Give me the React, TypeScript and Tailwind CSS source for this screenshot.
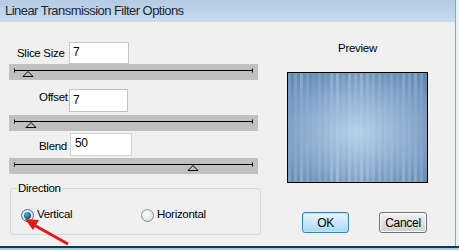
import React from 'react'

const stripes = [
  0.18, 0.05, 0.22, 0.1, 0.3, 0.08, 0.15, 0.26, 0.04, 0.2, 0.12, 0.28, 0.07, 0.18, 0.24, 0.09,
  0.3, 0.14, 0.06, 0.22, 0.27, 0.1, 0.19, 0.05, 0.25, 0.13, 0.21, 0.08, 0.16, 0.29, 0.11, 0.23,
  0.06, 0.2, 0.14, 0.26, 0.09, 0.17, 0.24, 0.07, 0.19, 0.12, 0.28, 0.05, 0.21, 0.15
]

function Slider({ thumb }: { thumb: number }) {
  return (
    <div className="w-[249px] h-[16px] bg-[#c0c0c0]">
      <svg width="249" height="16" viewBox="0 0 249 16">
        <line x1="5" y1="6.5" x2="244" y2="6.5" stroke="#000" strokeWidth="1" />
        <line x1="5.5" y1="4.5" x2="5.5" y2="8.5" stroke="#000" strokeWidth="1" />
        <line x1="243.5" y1="4.5" x2="243.5" y2="8.5" stroke="#000" strokeWidth="1" />
        <polygon
          points={`${thumb - 5},12.5 ${thumb + 5},12.5 ${thumb},7.5`}
          fill="none"
          stroke="#000"
          strokeWidth="1"
        />
      </svg>
    </div>
  )
}

function Radio({ checked }: { checked?: boolean }) {
  return (
    <div
      className={
        checked
          ? 'w-[13px] h-[13px] rounded-full border border-[#3f6f8f] bg-[radial-gradient(circle_at_50%_40%,#ffffff,#c9d6e0)] flex items-center justify-center'
          : 'w-[13px] h-[13px] rounded-full border border-[#8e8f8f] bg-[radial-gradient(circle_at_40%_35%,#ffffff,#d4d4d4)] flex items-center justify-center'
      }
    >
      {checked && (
        <div className="w-[7px] h-[7px] rounded-full bg-[radial-gradient(circle_at_40%_35%,#5fb8dd,#0f4c6c_70%)]" />
      )}
    </div>
  )
}

function Preview() {
  return (
    <svg width="139" height="109" viewBox="0 0 139 109">
      <defs>
        <radialGradient id="pg" cx="0.5" cy="0.55" r="0.7">
          <stop offset="0" stopColor="#b9d2ea" />
          <stop offset="0.55" stopColor="#8cadd0" />
          <stop offset="1" stopColor="#6189b3" />
        </radialGradient>
        <linearGradient id="fade" x1="0" y1="0" x2="0" y2="1">
          <stop offset="0" stopColor="#fff" stopOpacity="1" />
          <stop offset="0.35" stopColor="#fff" stopOpacity="0.2" />
          <stop offset="0.65" stopColor="#fff" stopOpacity="0.2" />
          <stop offset="1" stopColor="#fff" stopOpacity="1" />
        </linearGradient>
        <mask id="fm">
          <rect x="0" y="0" width="139" height="109" fill="url(#fade)" />
        </mask>
      </defs>
      <rect x="0" y="0" width="139" height="109" fill="url(#pg)" />
      <g mask="url(#fm)">
        {stripes.map((o, i) => (
          <rect
            key={i}
            x={i * 3}
            y="0"
            width="3"
            height="109"
            fill={i % 2 === 0 ? '#dbe8f5' : '#5a82ad'}
            opacity={o}
          />
        ))}
      </g>
    </svg>
  )
}

export default function App() {
  return (
    <div className="relative w-[459px] h-[250px] overflow-hidden bg-[#f0f0f0] flex flex-col font-['Liberation_Sans',Arial,sans-serif] text-black">
      <div className="flex h-[246px]">
        <div className="flex-1 flex flex-col">
          <div className="h-[22px] flex items-center pl-[5px] bg-gradient-to-b from-[#b4cbe4] to-[#c9dbef] text-[13px] tracking-[-0.55px] text-[#1a2636]">
            Linear Transmission Filter Options
          </div>

          <div className="flex">
            <div className="pl-[9px] w-[258px] flex flex-col text-[11.5px] tracking-[-0.3px]">
              <div className="mt-[20px] flex items-center h-[22px]">
                <span className="ml-[8px] w-[52px] pt-[1px]">Slice Size</span>
                <input
                  readOnly
                  defaultValue="7"
                  className="w-[60px] h-[22px] border border-[#c5c7cb] bg-white pl-[3px] pb-[2px] text-[12px] outline-none"
                />
              </div>
              <Slider thumb={19} />

              <div className="mt-[9px] flex items-center h-[23px]">
                <span className="ml-[30px] w-[30px] pb-[6px]">Offset</span>
                <input
                  readOnly
                  defaultValue="7"
                  className="w-[59px] h-[23px] border border-[#a9c8e6] bg-white pl-[3px] pb-[2px] text-[12px] outline-none"
                />
              </div>
              <div className="mt-[3px]">
                <Slider thumb={22} />
              </div>

              <div className="mt-[2px] flex items-center h-[23px]">
                <span className="ml-[30px] w-[31px] pt-[5px]">Blend</span>
                <input
                  readOnly
                  defaultValue="50"
                  className="w-[62px] h-[23px] border border-[#d0d2d6] bg-white pl-[4px] pb-[3px] text-[12px] outline-none"
                />
              </div>
              <div className="mt-[2px]">
                <Slider thumb={184} />
              </div>

              <fieldset className="mt-[7px] ml-[1px] w-[251px] h-[54px] border border-[#d5dadf] rounded-[3px] pt-[13px]">
                <legend className="ml-[6px] px-[1px] leading-[14px]">Direction</legend>
                <div className="flex items-center h-[14px] pl-[10px]">
                  <div className="w-[120px] flex items-center gap-[3px]">
                    <Radio checked />
                    <span>Vertical</span>
                  </div>
                  <div className="flex items-center gap-[3px]">
                    <Radio />
                    <span>Horizontal</span>
                  </div>
                </div>
              </fieldset>
            </div>

            <div className="ml-[29px] w-[141px] flex flex-col text-[11.5px] tracking-[-0.3px]">
              <div className="mt-[19px] h-[14px] leading-[14px] text-center">Preview</div>
              <div className="mt-[17px] w-[141px] h-[111px] border border-black">
                <Preview />
              </div>
              <div className="mt-[29px] ml-[15px] flex gap-[30px] text-[12px]">
                <button className="w-[47px] h-[21px] rounded-[3px] border border-[#3c7fb1] bg-gradient-to-b from-[#eaf6fd] to-[#a7d9f5] shadow-[inset_0_0_0_1px_#c4e5f6]">
                  OK
                </button>
                <button className="w-[48px] h-[21px] rounded-[3px] border border-[#707070] bg-gradient-to-b from-[#f2f2f2] to-[#d0d0d0] shadow-[inset_0_0_0_1px_#fcfcfc]">
                  Cancel
                </button>
              </div>
            </div>
          </div>
        </div>
        <div className="w-[4px] border-l border-[#45c3ea] bg-[#e3f1f8]" />
      </div>
      <div className="h-[4px] flex flex-col">
        <div className="h-[2px] bg-[#20344c]" />
        <div className="h-[2px] bg-[#9fd0e8]" />
      </div>

      <svg className="absolute left-0 top-0 pointer-events-none" width="459" height="250">
        <line x1="68" y1="244" x2="34" y2="225" stroke="#e3191c" strokeWidth="3" />
        <polygon points="25,219 39,220 33,230" fill="#e3191c" />
      </svg>
    </div>
  )
}
